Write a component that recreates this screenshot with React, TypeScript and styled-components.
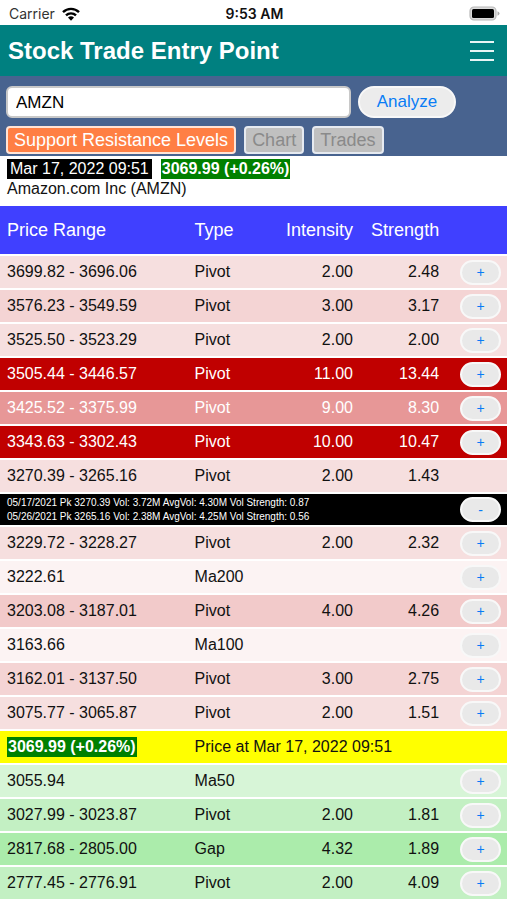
import React, { useState } from "react";
import styled, { createGlobalStyle } from "styled-components";

const GlobalStyle = createGlobalStyle`
  * { box-sizing: border-box; }
  body {
    margin: 0;
    background: #fff;
    color: #111;
    font: 16px/18px "Liberation Sans", Arial, sans-serif;
  }
  button, input { font-family: inherit; }
`;

const Screen = styled.div`
  height: 100vh;
  overflow: hidden;
`;

const StatusBar = styled.div`
  display: grid;
  grid-template-columns: 1fr auto 1fr;
  align-items: center;
  height: 25px;
  padding: 2px 7px 0 9px;
  font: 14px/20px Inter, sans-serif;
`;

const Carrier = styled.span`
  display: flex;
  align-items: center;
  gap: 7px;
  color: #333;
`;

const Clock = styled.span`
  font-weight: 600;
  color: #111;
`;

const BatterySlot = styled.span`
  display: flex;
  justify-content: flex-end;
`;

const Header = styled.header`
  display: flex;
  align-items: center;
  justify-content: space-between;
  height: 51px;
  padding: 0 13px 0 8px;
  background: #008080;
`;

const Title = styled.h1`
  margin: 0;
  color: #fff;
  font-size: 24px;
  line-height: 32px;
`;

const MenuButton = styled.button`
  display: flex;
  padding: 0;
  border: 0;
  background: none;
`;

const SearchPanel = styled.form`
  display: flex;
  flex-direction: column;
  gap: 8px;
  padding: 10px 6px 2px;
  background: #48638f;
`;

const SearchRow = styled.div`
  display: flex;
  align-items: center;
  gap: 7px;
  padding-right: 45px;
`;

const SymbolInput = styled.input`
  flex: 1;
  min-width: 0;
  height: 32px;
  padding: 2px 8px 0;
  border: 2px solid #c8c8c8;
  border-radius: 6px;
  background: #fff;
  color: #000;
  font-size: 17px;
`;

const AnalyzeButton = styled.button`
  width: 98px;
  height: 32px;
  padding: 0;
  border: 2px solid #f8f8f8;
  border-radius: 16px;
  background: #ececec;
  color: #087cf5;
  font-size: 17px;
`;

const Tabs = styled.div`
  display: flex;
  gap: 8px;
`;

const Tab = styled.button<{ $active?: boolean }>`
  height: 28px;
  padding: 0 6px;
  border: 2px solid ${(p) => (p.$active ? "#ffe4d6" : "#e6eaf0")};
  border-radius: 4px;
  background: ${(p) => (p.$active ? "#ff7f44" : "#c0c0c0")};
  color: ${(p) => (p.$active ? "#fff" : "#8a8a8a")};
  font-size: 18px;
  line-height: 24px;
`;

const Quote = styled.section`
  padding: 3px 7px 6px;
`;

const QuoteLine = styled.div`
  display: flex;
  gap: 9px;
  margin-bottom: 1px;
`;

const DateBadge = styled.time`
  padding: 0 3px;
  background: #000;
  color: #fff;
  line-height: 20px;
`;

const PriceBadge = styled.strong`
  display: inline-block;
  padding: 0 1px;
  background: #008000;
  color: #fff;
  line-height: 20px;
`;

const Company = styled.div`
  line-height: 18px;
`;

const Levels = styled.table`
  width: 100%;
  table-layout: fixed;
  border-collapse: separate;
  border-spacing: 0 2px;
`;

const Col = styled.col<{ $share: number }>`
  width: ${(p) => p.$share}%;
`;

const HeadRow = styled.tr`
  height: 48px;
  background: #4040ff;
  color: #fff;
`;

const Heading = styled.th<{ $right?: boolean }>`
  padding: 0 7px;
  text-align: ${(p) => (p.$right ? "right" : "left")};
  font-size: 18px;
  font-weight: 400;
`;

type Tone = "rose" | "pink" | "blush" | "red" | "coral" | "salmon" | "mint" | "green" | "deepGreen";

const tones: Record<Tone, string> = {
  rose: "#f6dfdf",
  pink: "#f4d4d4",
  salmon: "#f2caca",
  blush: "#fcf3f3",
  red: "#c00000",
  coral: "#e79797",
  mint: "#d7f5d7",
  green: "#c3f0c3",
  deepGreen: "#abecab",
};

const LevelRow = styled.tr<{ $tone: Tone }>`
  height: 32px;
  background: ${(p) => tones[p.$tone]};
  color: ${(p) => (p.$tone === "red" || p.$tone === "coral" ? "#fff" : "#111")};
`;

const PriceRow = styled.tr`
  height: 32px;
  background: #ffff00;
`;

const DetailRow = styled.tr`
  height: 31px;
  background: #000;
  color: #fff;
`;

const Cell = styled.td<{ $right?: boolean }>`
  padding: 0 7px;
  text-align: ${(p) => (p.$right ? "right" : "left")};
  white-space: nowrap;
`;

const DetailCell = styled(Cell)`
  font-size: 10px;
  line-height: 14px;
`;

const ToggleCell = styled.td`
  padding: 0 6px 0 0;
`;

const Toggle = styled.button`
  display: block;
  width: 41px;
  height: 25px;
  margin-left: auto;
  padding: 0;
  border: 2px solid #f8f8f8;
  border-radius: 13px;
  background: #e9e9e9;
  color: #087cf5;
  font-size: 14px;
  line-height: 20px;
`;

const WifiIcon = () => (
  <svg width="18" height="14" viewBox="0 0 18 14" aria-hidden="true">
    <g fill="none" stroke="#000" strokeWidth="2.4">
      <path d="M1 5.2a11.4 11.4 0 0 1 16 0" />
      <path d="M4 8.4a7.1 7.1 0 0 1 10 0" />
    </g>
    <path d="M6 10.6a4.3 4.3 0 0 1 6 0L9 13.8Z" fill="#000" />
  </svg>
);

const BatteryIcon = () => (
  <svg width="31" height="15" viewBox="0 0 31 15" aria-hidden="true">
    <rect x="1" y="1" width="26" height="13" rx="4" fill="#dcdcdc" stroke="#b8b8b8" strokeWidth="1.2" />
    <rect x="3" y="3" width="22" height="9" rx="1.5" fill="#000" />
    <path d="M28.5 5.2q2 .8 2 2.3t-2 2.3Z" fill="#aaa" />
  </svg>
);

const MenuIcon = () => (
  <svg width="24" height="22" viewBox="0 0 24 22" aria-hidden="true">
    <path d="M0 2h24M0 11h24M0 20h24" stroke="#e8f5f5" strokeWidth="2" />
  </svg>
);

interface Level {
  range: string;
  type: string;
  intensity?: string;
  strength?: string;
  tone: Tone;
  details?: string[];
}

const resistance: Level[] = [
  { range: "3699.82 - 3696.06", type: "Pivot", intensity: "2.00", strength: "2.48", tone: "rose" },
  { range: "3576.23 - 3549.59", type: "Pivot", intensity: "3.00", strength: "3.17", tone: "pink" },
  { range: "3525.50 - 3523.29", type: "Pivot", intensity: "2.00", strength: "2.00", tone: "rose" },
  { range: "3505.44 - 3446.57", type: "Pivot", intensity: "11.00", strength: "13.44", tone: "red" },
  { range: "3425.52 - 3375.99", type: "Pivot", intensity: "9.00", strength: "8.30", tone: "coral" },
  { range: "3343.63 - 3302.43", type: "Pivot", intensity: "10.00", strength: "10.47", tone: "red" },
  {
    range: "3270.39 - 3265.16",
    type: "Pivot",
    intensity: "2.00",
    strength: "1.43",
    tone: "rose",
    details: [
      "05/17/2021 Pk 3270.39 Vol: 3.72M AvgVol: 4.30M Vol Strength: 0.87",
      "05/26/2021 Pk 3265.16 Vol: 2.38M AvgVol: 4.25M Vol Strength: 0.56",
    ],
  },
  { range: "3229.72 - 3228.27", type: "Pivot", intensity: "2.00", strength: "2.32", tone: "rose" },
  { range: "3222.61", type: "Ma200", tone: "blush" },
  { range: "3203.08 - 3187.01", type: "Pivot", intensity: "4.00", strength: "4.26", tone: "salmon" },
  { range: "3163.66", type: "Ma100", tone: "blush" },
  { range: "3162.01 - 3137.50", type: "Pivot", intensity: "3.00", strength: "2.75", tone: "pink" },
  { range: "3075.77 - 3065.87", type: "Pivot", intensity: "2.00", strength: "1.51", tone: "rose" },
];

const support: Level[] = [
  { range: "3055.94", type: "Ma50", tone: "mint" },
  { range: "3027.99 - 3023.87", type: "Pivot", intensity: "2.00", strength: "1.81", tone: "green" },
  { range: "2817.68 - 2805.00", type: "Gap", intensity: "4.32", strength: "1.89", tone: "deepGreen" },
  { range: "2777.45 - 2776.91", type: "Pivot", intensity: "2.00", strength: "4.09", tone: "green" },
];

const LevelRows = ({ level }: { level: Level }) => (
  <>
    <LevelRow $tone={level.tone}>
      <Cell>{level.range}</Cell>
      <Cell>{level.type}</Cell>
      <Cell $right>{level.intensity}</Cell>
      <Cell $right>{level.strength}</Cell>
      <ToggleCell>
        {!level.details && <Toggle type="button" aria-label={`Expand ${level.range}`}>+</Toggle>}
      </ToggleCell>
    </LevelRow>
    {level.details && (
      <DetailRow>
        <DetailCell colSpan={4}>
          {level.details.map((line) => (
            <div key={line}>{line}</div>
          ))}
        </DetailCell>
        <ToggleCell>
          <Toggle type="button" aria-label={`Collapse ${level.range}`}>-</Toggle>
        </ToggleCell>
      </DetailRow>
    )}
  </>
);

const tabNames = ["Support Resistance Levels", "Chart", "Trades"];

export default function App() {
  const [symbol, setSymbol] = useState("AMZN");
  const [tab, setTab] = useState(tabNames[0]);

  return (
    <Screen>
      <GlobalStyle />
      <StatusBar>
        <Carrier>
          Carrier <WifiIcon />
        </Carrier>
        <Clock>9:53 AM</Clock>
        <BatterySlot>
          <BatteryIcon />
        </BatterySlot>
      </StatusBar>
      <Header>
        <Title>Stock Trade Entry Point</Title>
        <MenuButton type="button" aria-label="Menu">
          <MenuIcon />
        </MenuButton>
      </Header>
      <SearchPanel onSubmit={(e) => e.preventDefault()}>
        <SearchRow>
          <SymbolInput
            aria-label="Stock symbol"
            value={symbol}
            onChange={(e) => setSymbol(e.target.value)}
          />
          <AnalyzeButton type="submit">Analyze</AnalyzeButton>
        </SearchRow>
        <Tabs>
          {tabNames.map((name) => (
            <Tab key={name} type="button" $active={name === tab} onClick={() => setTab(name)}>
              {name}
            </Tab>
          ))}
        </Tabs>
      </SearchPanel>
      <Quote>
        <QuoteLine>
          <DateBadge>Mar 17, 2022 09:51</DateBadge>
          <PriceBadge>3069.99 (+0.26%)</PriceBadge>
        </QuoteLine>
        <Company>Amazon.com Inc (AMZN)</Company>
      </Quote>
      <Levels>
        <colgroup>
          <Col $share={37} />
          <Col $share={16} />
          <Col $share={18} />
          <Col $share={17} />
          <Col $share={12} />
        </colgroup>
        <thead>
          <HeadRow>
            <Heading>Price Range</Heading>
            <Heading>Type</Heading>
            <Heading $right>Intensity</Heading>
            <Heading $right>Strength</Heading>
            <Heading />
          </HeadRow>
        </thead>
        <tbody>
          {resistance.map((level) => (
            <LevelRows key={level.range} level={level} />
          ))}
          <PriceRow>
            <Cell>
              <PriceBadge>3069.99 (+0.26%)</PriceBadge>
            </Cell>
            <Cell colSpan={4}>Price at Mar 17, 2022 09:51</Cell>
          </PriceRow>
          {support.map((level) => (
            <LevelRows key={level.range} level={level} />
          ))}
        </tbody>
      </Levels>
    </Screen>
  );
}
